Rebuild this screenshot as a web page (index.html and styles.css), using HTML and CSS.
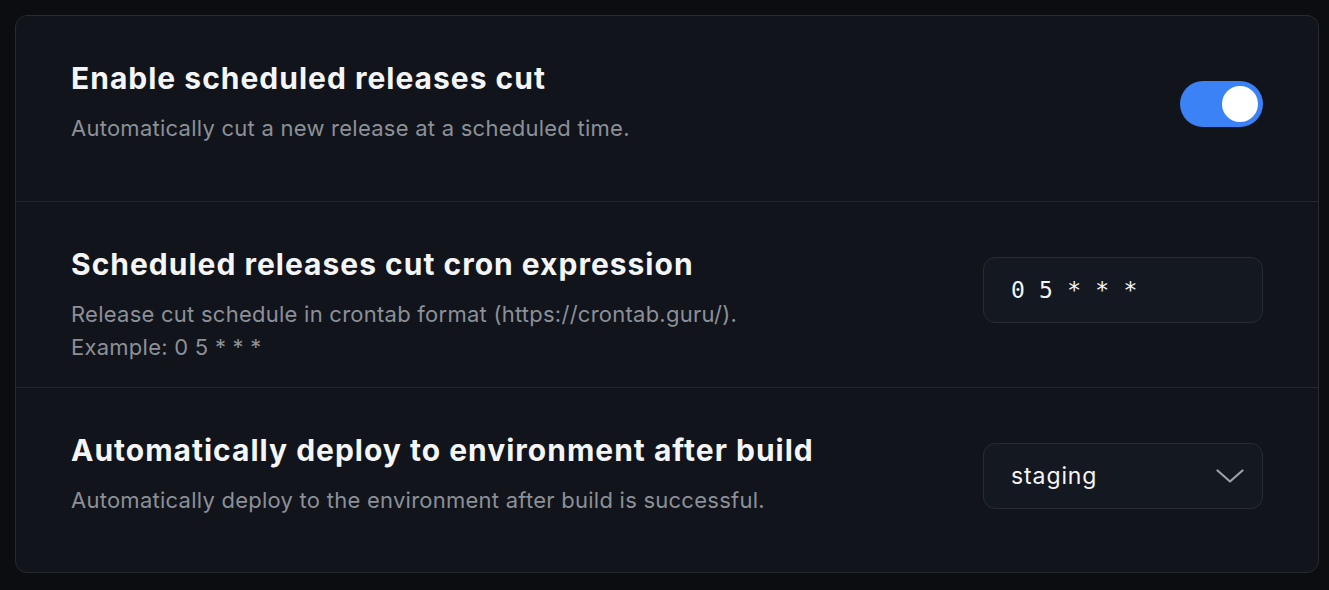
FILE: index.html
```html
<!DOCTYPE html>
<html lang="en">
<head>
<meta charset="utf-8">
<title>Release settings</title>
<link rel="stylesheet" href="styles.css">
</head>
<body>
<section class="card">
  <div class="row">
    <div class="text">
      <h2 class="title">Enable scheduled releases cut</h2>
      <p class="desc">Automatically cut a new release at a scheduled time.</p>
    </div>
    <div class="control">
      <button class="toggle on" type="button" aria-pressed="true"><span class="knob"></span></button>
    </div>
  </div>
  <div class="row">
    <div class="text">
      <h2 class="title">Scheduled releases cut cron expression</h2>
      <p class="desc">Release cut schedule in crontab format (https://crontab.guru/).<br>Example: 0 5 * * *</p>
    </div>
    <div class="control">
      <div class="field mono">0 5 * * *</div>
    </div>
  </div>
  <div class="row">
    <div class="text">
      <h2 class="title">Automatically deploy to environment after build</h2>
      <p class="desc">Automatically deploy to the environment after build is successful.</p>
    </div>
    <div class="control">
      <div class="field select">
        <span>staging</span>
        <svg class="chev" width="28" height="14" viewBox="0 0 28 14" fill="none"><path d="M1.5 1.5 L14 12.5 L26.5 1.5" stroke="#9ca1a9" stroke-width="2.2" stroke-linecap="round" stroke-linejoin="round"/></svg>
      </div>
    </div>
  </div>
</section>
</body>
</html>
```
FILE: styles.css
```css
* { box-sizing: border-box; }
html, body { margin: 0; padding: 0; }
body {
  background: #0b0d11;
  font-family: Inter, "Liberation Sans", Arial, sans-serif;
  padding: 15px 10px 17px 15px;
}
.card {
  width: 1304px;
  height: 558px;
  border: 1px solid #262a31;
  border-radius: 12px;
  background: #11141a;
  display: grid;
  grid-template-rows: 1fr 1fr 1fr;
}
.row {
  display: flex;
  justify-content: space-between;
  align-items: flex-start;
  padding: 43px 55px 0 55px;
}
.row + .row { border-top: 1px solid #22262d; }
.title {
  margin: 0;
  font-size: 30px;
  line-height: 38px;
  font-weight: 700;
  color: #f4f5f7;
  letter-spacing: 1px;
}
.desc {
  margin: 15px 0 0 0;
  font-size: 22px;
  line-height: 33px;
  color: #8b9099;
  letter-spacing: 0.25px;
}
.control {
  height: 66px;
  margin-top: 12px;
  display: flex;
  align-items: center;
}
.toggle {
  width: 83px;
  height: 46px;
  border-radius: 23px;
  border: 0;
  padding: 0 5px;
  background: #3b82f6;
  display: flex;
  align-items: center;
  justify-content: flex-end;
}
.knob {
  width: 36px;
  height: 36px;
  border-radius: 50%;
  background: #ffffff;
}
.field {
  width: 280px;
  height: 66px;
  border: 1px solid #272c34;
  border-radius: 12px;
  background: #141820;
  padding: 0 18px 0 27px;
  display: flex;
  align-items: center;
  color: #f4f5f7;
  font-size: 23px;
  letter-spacing: 0.9px;
}
.mono {
  font-family: "DejaVu Sans Mono", monospace;
  font-size: 23px;
  letter-spacing: 0.2px;
  font-weight: 500;
  white-space: pre;
}
.select { justify-content: space-between; }
.chev { display: block; }
```
